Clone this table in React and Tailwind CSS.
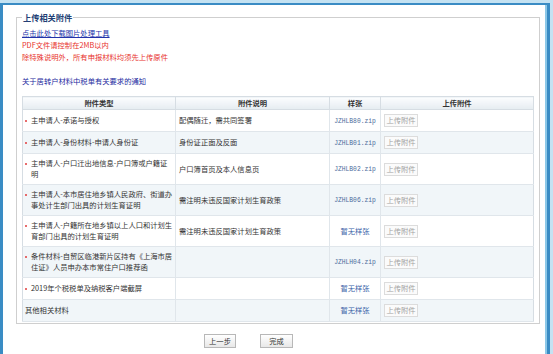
import React from "react";

const rows = [
  {
    type: ["主申请人-承诺与授权"],
    desc: "配偶随迁，需共同签署",
    sample: "JZHLB80.zip",
  },
  {
    type: ["主申请人-身份材料-申请人身份证"],
    desc: "身份证正面及反面",
    sample: "JZHLB01.zip",
  },
  {
    type: ["主申请人-户口迁出地信息-户口簿或户籍证", "明"],
    desc: "户口簿首页及本人信息页",
    sample: "JZHLB02.zip",
  },
  {
    type: ["主申请人-本市居住地乡镇人民政府、街道办", "事处计生部门出具的计划生育证明"],
    desc: "需注明未违反国家计划生育政策",
    sample: "JZHLB06.zip",
  },
  {
    type: ["主申请人-户籍所在地乡镇以上人口和计划生", "育部门出具的计划生育证明"],
    desc: "需注明未违反国家计划生育政策",
    sample: null,
  },
  {
    type: ["条件材料-自贸区临港新片区持有《上海市居", "住证》人员申办本市常住户口推荐函"],
    desc: "",
    sample: "JZHLH04.zip",
  },
  {
    type: ["2019年个税税单及纳税客户端截屏"],
    desc: "",
    sample: null,
  },
  {
    type: ["其他相关材料"],
    desc: "",
    sample: null,
    noBullet: true,
  },
];

const Frame = () => {
  return (
    <div className="min-h-screen bg-[#c4e2f2] pt-[3px] pr-[3px] [font-family:'Noto_Sans_CJK_SC','Liberation_Sans',sans-serif] text-[7.3px] text-[#333]">
      <div className="min-h-[351px] bg-white border-t-2 border-l-[3px] border-r-[3px] border-[#3a8cc4]">
        <div className="min-h-[349px] border-r-2 border-[#8cc8e8] pt-[6px] pl-[13px] pr-[5px]">
          {/* 上传相关附件 */}
          <fieldset className="border border-[#cfcfcf] px-[5px] pb-[1px]">
            <legend className="px-[1px] text-[8.2px] leading-[12px] font-bold text-[#233f75]">
              上传相关附件
            </legend>

            <div className="pt-[4px] leading-[12px]">
              <a href="#" className="block w-max underline text-[#2233aa]">
                点击此处下载图片处理工具
              </a>
              <p className="text-[#e8322c]">PDF文件请控制在2MB以内</p>
              <p className="text-[#e8322c]">除特殊说明外，所有申报材料均须先上传原件</p>
              <div className="h-[12px]" />
              <p className="text-[#1d2aa0]">关于居转户材料中税单有关要求的通知</p>
            </div>

            <table className="mt-[9px] w-full table-fixed border-collapse border border-[#d6dde3]">
              <colgroup>
                <col className="w-[153px]" />
                <col className="w-[154px]" />
                <col className="w-[51px]" />
                <col className="w-[153px]" />
              </colgroup>
              <thead>
                <tr>
                  <th className="h-[13px] p-0 leading-[12px] font-bold text-[#333] border-r border-b border-[#d6dde3] bg-gradient-to-b from-[#fcfdfe] to-[#e5ecf1]">
                    附件类型
                  </th>
                  <th className="h-[13px] p-0 leading-[12px] font-bold text-[#333] border-r border-b border-[#d6dde3] bg-gradient-to-b from-[#fcfdfe] to-[#e5ecf1]">
                    附件说明
                  </th>
                  <th className="h-[13px] p-0 leading-[12px] font-bold text-[#333] border-r border-b border-[#d6dde3] bg-gradient-to-b from-[#fcfdfe] to-[#e5ecf1]">
                    样张
                  </th>
                  <th className="h-[13px] p-0 leading-[12px] font-bold text-[#333] border-b border-[#d6dde3] bg-gradient-to-b from-[#fcfdfe] to-[#e5ecf1]">
                    上传附件
                  </th>
                </tr>
              </thead>
              <tbody>
                {rows.map((row, i) => (
                  <tr key={i} className={i % 2 === 1 ? "bg-[#f1f6f9]" : "bg-white"}>
                    <td className="py-[4px] pl-[2px] pr-0 leading-[11px] align-middle border-r border-b border-[#e0e6eb]">
                      <div className="flex">
                        {!row.noBullet && (
                          <span className="w-[6px] h-[11px] shrink-0 flex items-center">
                            <span className="w-[2px] h-[2px] rounded-full bg-[#e23b3b]" />
                          </span>
                        )}
                        <div>
                          {row.type.map((line, j) => (
                            <div key={j} className="whitespace-nowrap">
                              {line}
                            </div>
                          ))}
                        </div>
                      </div>
                    </td>
                    <td className="py-[4px] pl-[3px] pr-0 leading-[11px] align-middle border-r border-b border-[#e0e6eb] whitespace-nowrap">
                      {row.desc}
                    </td>
                    <td className="py-[4px] px-0 leading-[11px] align-middle text-center border-r border-b border-[#e0e6eb]">
                      {row.sample ? (
                        <span className="[font-family:'Liberation_Mono',monospace] text-[6.3px] text-[#4b6b9b]">
                          {row.sample}
                        </span>
                      ) : (
                        <span className="text-[#3a62a8]">暂无样张</span>
                      )}
                    </td>
                    <td className="py-[4px] pl-[3px] pr-0 leading-[11px] align-middle border-b border-[#e0e6eb]">
                      <span className="flex items-center justify-center w-[34px] h-[13px] border border-[#dcdcdc] bg-[#fbfbfb] text-[#a3a3a3]">
                        上传附件
                      </span>
                    </td>
                  </tr>
                ))}
              </tbody>
            </table>
          </fieldset>

          {/* Buttons */}
          <div className="mt-[10px] ml-[188px] flex gap-[24px]">
            <button className="w-[32px] h-[14px] flex items-center justify-center border border-[#b8b8b8] bg-gradient-to-b from-white to-[#e8e8e8] text-[#333] leading-[12px]">
              上一步
            </button>
            <button className="w-[33px] h-[14px] flex items-center justify-center border border-[#b8b8b8] bg-gradient-to-b from-white to-[#e8e8e8] text-[#333] leading-[12px]">
              完成
            </button>
          </div>
        </div>
      </div>
    </div>
  );
};

export default function App() {
  return <Frame />;
}
